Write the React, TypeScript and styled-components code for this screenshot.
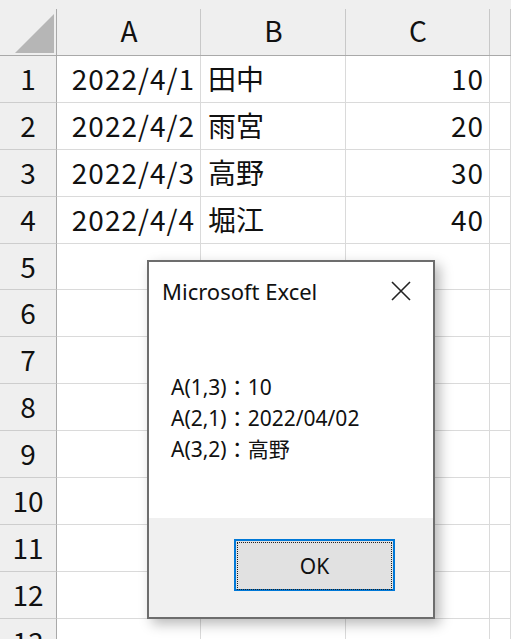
import React from 'react';
import styled, { createGlobalStyle } from 'styled-components';

const GlobalStyle = createGlobalStyle`
	html, body {
		margin: 0;
		padding: 0;
		background: white;
		overflow: hidden;
	}
	body {
		font-family: "Noto Sans CJK JP", "Noto Sans", sans-serif;
	}
`;

const ROW_H = 46.9;

const Page = styled.div`
	position: relative;
	width: 511px;
	height: 639px;
	overflow: hidden;
`;

const Sheet = styled.div`
	display: grid;
	grid-template-columns: 57px 144px 145px 144px 1fr;
	grid-template-rows: 56px repeat(13, ${ROW_H}px);
	font-family: "Noto Sans CJK JP", sans-serif;
	font-size: 28px;
	color: #111;
`;

const Corner = styled.div`
	box-sizing: border-box;
	background:
		linear-gradient(#a9a9a9, #a9a9a9) right 9px / 1px calc(100% - 9px) no-repeat,
		#efefef;
	border-bottom: 1px solid #a9a9a9;
	display: flex;
	align-items: flex-end;
	justify-content: flex-end;
	padding: 0 3px 2px 0;

	svg {
		display: block;
	}
`;

const ColHead = styled.div`
	box-sizing: border-box;
	background:
		linear-gradient(#c8c8c8, #c8c8c8) right 9px / 1px calc(100% - 9px) no-repeat,
		#efefef;
	border-bottom: 1px solid #a9a9a9;
	display: flex;
	align-items: center;
	justify-content: center;
	padding-top: 5px;
	line-height: 1;
`;

const RowHead = styled.div`
	box-sizing: border-box;
	background: #efefef;
	border-right: 1px solid #a9a9a9;
	border-bottom: 1px solid #cdcdcd;
	display: flex;
	align-items: center;
	justify-content: center;
	line-height: 1;
	padding-bottom: 2px;
`;

const Cell = styled.div<{ $align?: 'left' | 'right' }>`
	box-sizing: border-box;
	border-right: 1px solid #dadada;
	border-bottom: 1px solid #dadada;
	display: flex;
	align-items: center;
	justify-content: ${props => props.$align === 'right' ? 'flex-end' : 'flex-start'};
	padding: 0 ${props => props.$align === 'right' ? '5px' : '6px'} 2px 7px;
	letter-spacing: ${props => props.$align === 'right' ? '1px' : '0'};
	line-height: 1;
	white-space: nowrap;
	overflow: hidden;
`;

const Dialog = styled.div`
	position: absolute;
	left: 147px;
	top: 260px;
	width: 288px;
	height: 359px;
	box-sizing: border-box;
	border: 2px solid #6d6d6d;
	background: white;
	box-shadow: 5px 5px 12px rgba(0, 0, 0, 0.28);
	display: flex;
	flex-direction: column;
	font-family: "Noto Sans", "Noto Sans CJK JP", sans-serif;
	color: #111;
`;

const TitleBar = styled.div`
	height: 58px;
	display: flex;
	align-items: center;
	justify-content: space-between;
	padding: 0 22px 0 13px;
	font-size: 22px;

	svg {
		display: block;
	}
`;

const Message = styled.div`
	flex: 1;
	padding: 52px 0 0 22px;
	font-size: 21px;
	line-height: 31px;
`;

const Footer = styled.div`
	height: 99px;
	background: #f0f0f0;
	display: flex;
	justify-content: flex-end;
	align-items: flex-start;
	padding: 21px 38px 0 0;
	box-sizing: border-box;
`;

const Button = styled.button`
	width: 161px;
	height: 52px;
	box-sizing: border-box;
	border: 2px solid #0078d7;
	background: #e1e1e1;
	padding: 1px;
	font-family: "Noto Sans", sans-serif;
	font-size: 21px;
	color: #111;

	span {
		display: flex;
		align-items: center;
		justify-content: center;
		height: 100%;
		border: 1px dotted #222;
	}
`;

const rows = [
	{ date: '2022/4/1', name: '田中', value: 10 },
	{ date: '2022/4/2', name: '雨宮', value: 20 },
	{ date: '2022/4/3', name: '高野', value: 30 },
	{ date: '2022/4/4', name: '堀江', value: 40 },
];

const App = () => {
	const lines = ['A(1,3)：10', 'A(2,1)：2022/04/02', 'A(3,2)：高野'];

	return (
		<Page>
			<GlobalStyle />
			<Sheet>
				<Corner>
					<svg width="39" height="39" viewBox="0 0 39 39">
						<polygon points="0,39 39,39 39,0" fill="#b6b6b6" />
					</svg>
				</Corner>
				<ColHead>A</ColHead>
				<ColHead>B</ColHead>
				<ColHead>C</ColHead>
				<ColHead />
				{Array.from({ length: 13 }, (_, i) => {
					const r = rows[i];
					return (
						<React.Fragment key={i}>
							<RowHead>{i + 1}</RowHead>
							<Cell $align="right">{r?.date}</Cell>
							<Cell>{r?.name}</Cell>
							<Cell $align="right">{r?.value}</Cell>
							<Cell />
						</React.Fragment>
					);
				})}
			</Sheet>

			<Dialog>
				<TitleBar>
					<span>Microsoft Excel</span>
					<svg width="20" height="20" viewBox="0 0 20 20">
						<path d="M1 1 L19 19 M19 1 L1 19" stroke="#222" strokeWidth="1.6" />
					</svg>
				</TitleBar>
				<Message>
					{lines.map(l => <div key={l}>{l}</div>)}
				</Message>
				<Footer>
					<Button><span>OK</span></Button>
				</Footer>
			</Dialog>
		</Page>
	);
};

export default App;
